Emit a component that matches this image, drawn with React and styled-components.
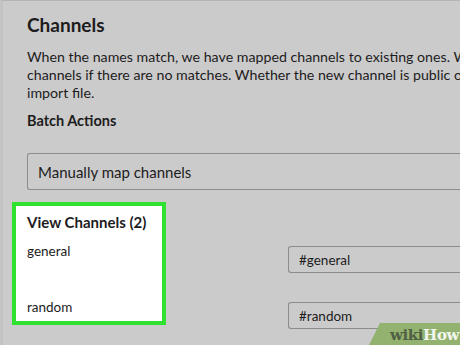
import React from "react";
import styled, { createGlobalStyle } from "styled-components";

const Global = createGlobalStyle`
  html, body {
    margin: 0;
    padding: 0;
    background: #cbcbcb;
    overflow: hidden;
  }
  body {
    font-family: Lato, "Noto Sans", sans-serif;
    color: #1d1c1d;
  }
`;

const Page = styled.div`
  position: relative;
  width: 460px;
  height: 345px;
  overflow: hidden;
  box-sizing: border-box;
  border-top: 1px solid #b4b4b4;
  border-left: 3px solid #c3c3c3;
  padding-left: 24px;
`;

const Heading = styled.h1`
  margin: 12px 0 0;
  font-size: 19px;
  font-weight: 700;
  line-height: 24px;
`;

const Intro = styled.p`
  margin: 11px 0 0;
  font-size: 14.2px;
  line-height: 18px;
  white-space: nowrap;
`;

const Label = styled.div`
  font-size: ${p => p.size || 14}px;
  font-weight: 700;
  line-height: 20px;
  margin-top: ${p => p.top || 0}px;
  white-space: nowrap;
`;

const Field = styled.div`
  box-sizing: border-box;
  display: flex;
  align-items: center;
  height: ${p => p.h || 27}px;
  width: ${p => p.w}px;
  margin-top: ${p => p.top || 0}px;
  padding-left: ${p => p.pad || 10}px;
  border: 1px solid #8c8c8c;
  border-right: none;
  border-radius: 3px 0 0 3px;
  font-size: ${p => p.size || 13.5}px;
  white-space: nowrap;
`;

const Mapping = styled.div`
  display: flex;
  margin-top: 12px;
  margin-left: -15px;
`;

const Highlight = styled.div`
  box-sizing: border-box;
  flex-shrink: 0;
  width: 154px;
  height: 123px;
  background: #ffffff;
  border: 4px solid #2fe22f;
  padding: 6px 0 0 11px;
`;

const ChannelName = styled.div`
  font-size: 13.5px;
  line-height: 18px;
  margin-top: ${p => p.top}px;
`;

const Inputs = styled.div`
  flex-shrink: 0;
  margin-left: 122px;
  width: 180px;
`;

const Watermark = styled.div`
  position: absolute;
  right: 0;
  bottom: 0;
  width: 90px;
  height: 22px;
  background: #93b26f;
  clip-path: polygon(11px 0, 100% 0, 100% 100%, 0 100%);
  display: flex;
  align-items: flex-end;
  justify-content: flex-end;
  padding-right: 1px;
  font-family: "DejaVu Serif", "Liberation Serif", serif;
  font-weight: 700;
  font-size: 15px;
  line-height: 20px;
  letter-spacing: -0.4px;
`;

const Wiki = styled.span`
  color: #4f5f44;
`;

const How = styled.span`
  color: #f2f6ee;
`;

export default function App() {
  return (
    <Page>
      <Global />
      <Heading>Channels</Heading>
      <Intro>
        When the names match, we have mapped channels to existing ones. We will create new
        <br />
        channels if there are no matches. Whether the new channel is public or private depends on the
        <br />
        import file.
      </Intro>
      <Label top={9} size={14.5}>Batch Actions</Label>
      <Field w={440} h={37} top={22} size={15}>Manually map channels</Field>
      <Mapping>
        <Highlight>
          <Label size={15}>View Channels (2)</Label>
          <ChannelName top={10}>general</ChannelName>
          <ChannelName top={38}>random</ChannelName>
        </Highlight>
        <Inputs>
          <Field w={180} top={44}>#general</Field>
          <Field w={180} top={29}>#random</Field>
        </Inputs>
      </Mapping>
      <Watermark>
        <Wiki>wiki</Wiki>
        <How>How</How>
      </Watermark>
    </Page>
  );
}
